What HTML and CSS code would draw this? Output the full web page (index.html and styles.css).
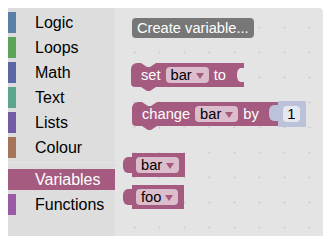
FILE: index.html
```html
<!DOCTYPE html>
<html lang="en">

<head>
    <meta charset="UTF-8">
    <title>Blockly toolbox</title>
    <link rel="stylesheet" href="styles.css">
</head>

<body>
    <div class="app">
        <div class="toolbox">
            <div class="cat"><span class="cat-bar logic"></span><span class="cat-label">Logic</span></div>
            <div class="cat"><span class="cat-bar loops"></span><span class="cat-label">Loops</span></div>
            <div class="cat"><span class="cat-bar math"></span><span class="cat-label">Math</span></div>
            <div class="cat"><span class="cat-bar text"></span><span class="cat-label">Text</span></div>
            <div class="cat"><span class="cat-bar lists"></span><span class="cat-label">Lists</span></div>
            <div class="cat"><span class="cat-bar colour"></span><span class="cat-label">Colour</span></div>
            <div class="separator"></div>
            <div class="cat selected"><span class="cat-bar variables"></span><span class="cat-label">Variables</span></div>
            <div class="cat"><span class="cat-bar functions"></span><span class="cat-label">Functions</span></div>
        </div>

        <div class="flyout">
            <svg class="grid" width="100%" height="100%">
                <defs>
                    <pattern id="dots" x="7" y="7" width="25" height="25" patternUnits="userSpaceOnUse">
                        <rect x="11" y="12" width="3" height="1" fill="#d4d4d4"></rect>
                        <rect x="12" y="11" width="1" height="3" fill="#d4d4d4"></rect>
                    </pattern>
                </defs>
                <rect width="100%" height="100%" fill="url(#dots)"></rect>
            </svg>

            <button class="create-btn">Create variable...</button>

            <div class="block stmt set-block">
                <span>set</span>
                <span class="field">bar<span class="arrow"></span></span>
                <span>to</span>
                <span class="slot"></span>
            </div>

            <div class="change-row">
                <div class="block stmt change-block">
                    <span>change</span>
                    <span class="field">bar<span class="arrow"></span></span>
                    <span>by</span>
                </div>
                <div class="block number-block">
                    <span class="num-field">1</span>
                </div>
            </div>

            <div class="block getter first">
                <span class="field">bar<span class="arrow"></span></span>
            </div>
            <div class="block getter">
                <span class="field">foo<span class="arrow"></span></span>
            </div>
        </div>
    </div>
</body>

</html>
```

FILE: styles.css
```css
* {
    margin: 0;
    padding: 0;
    box-sizing: border-box;
}

body {
    background: #fff;
    font-family: 'Liberation Sans', Arial, sans-serif;
}

.app {
    display: flex;
    height: 236px;
    padding: 8px 4px 0 8px;
}

/* toolbox */

.toolbox {
    width: 107px;
    background: #ddd;
    padding-top: 4px;
}

.cat {
    display: flex;
    align-items: center;
    height: 21px;
    margin-bottom: 4px;
    padding-top: 1px;
    font-size: 16px;
    color: #000;
}

.cat-bar {
    align-self: stretch;
    width: 8px;
    margin-top: -1px;
}

.cat-label {
    margin-left: 19px;
}

.cat.selected {
    background: #a55b80;
    color: #fff;
}

.separator {
    height: 1px;
    margin: 1px 0 6px;
    background: #e6e6e6;
}

.logic { background: #5b80a5; }
.loops { background: #5ba55b; }
.math { background: #5b67a5; }
.text { background: #5ba58c; }
.lists { background: #745ba5; }
.colour { background: #a5745b; }
.variables { background: #a55b80; }
.functions { background: #995ba5; }

/* flyout */

.flyout {
    flex: 1;
    position: relative;
    display: flex;
    flex-direction: column;
    align-items: flex-start;
    padding: 10px 0 0 17px;
    background: #e4e4e4;
    border-top-right-radius: 4px;
}

.grid {
    position: absolute;
    top: 0;
    left: 0;
}

.create-btn {
    position: relative;
    height: 20px;
    padding: 0 5px;
    border: none;
    border-radius: 4px;
    background: #777;
    color: #fff;
    font-family: 'Liberation Sans', Arial, sans-serif;
    font-size: 14.67px;
}

.block {
    position: relative;
    display: inline-flex;
    align-items: center;
    height: 24px;
    background: #a55b80;
    color: #fff;
    font-size: 14.67px;
}

.stmt {
    gap: 5px;
    padding-left: 10px;
    border-radius: 6px 0 0 4px;
}

/* previous notch */
.stmt::before {
    content: '';
    position: absolute;
    top: 0;
    left: 10px;
    width: 15px;
    height: 4px;
    background: #e4e4e4;
    clip-path: polygon(0 0, 100% 0, 60% 100%, 40% 100%);
}

/* next tab */
.stmt::after {
    content: '';
    position: absolute;
    top: 100%;
    left: 10px;
    width: 15px;
    height: 4px;
    background: #a55b80;
    clip-path: polygon(0 0, 100% 0, 60% 100%, 40% 100%);
}

.set-block {
    margin: 25px 0 0 -1px;
}

.slot {
    align-self: flex-start;
    width: 7px;
    height: 14px;
    margin: 5px 0 0 6px;
    background: #e4e4e4;
    border-radius: 4px 0 0 4px / 6px 0 0 6px;
}

.change-row {
    display: flex;
    align-items: center;
    margin-top: 14px;
}

.change-block {
    padding-right: 19px;
}

.number-block {
    width: 28px;
    height: 26px;
    background: #bdc2db;
    padding-left: 5px;
}

.number-block::before,
.getter::before {
    content: '';
    position: absolute;
    left: -9px;
    top: 4px;
    width: 9px;
    height: 16px;
    background: inherit;
    border-radius: 5px 0 0 5px / 6px 0 0 6px;
}

.num-field {
    display: flex;
    align-items: center;
    justify-content: center;
    width: 17px;
    height: 16px;
    border-radius: 4px;
    background: #e5e7f1;
    color: #000;
}

.field {
    display: inline-flex;
    align-items: center;
    gap: 4px;
    height: 16px;
    padding: 0 5px;
    border-radius: 4px;
    background: #dbbdcc;
    color: #000;
}

.arrow {
    width: 0;
    height: 0;
    margin-top: 2px;
    border-left: 4px solid transparent;
    border-right: 4px solid transparent;
    border-top: 6px solid #a55b80;
}

.getter {
    padding: 0 6px 0 4px;
    margin-top: 8px;
}

.getter.first {
    margin-top: 26px;
}
```
